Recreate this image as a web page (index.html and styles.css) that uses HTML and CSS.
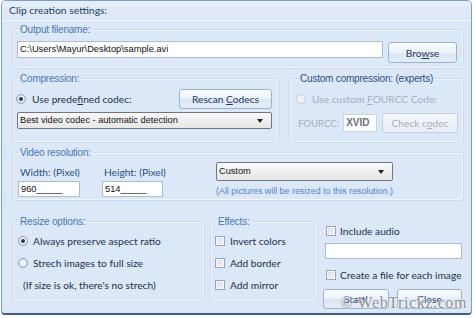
FILE: index.html
```html
<!DOCTYPE html>
<html lang="en">
<head>
    <meta charset="UTF-8">
    <title>Clip creation settings</title>
    <link rel="stylesheet" href="styles.css">
</head>
<body>
    <div class="window">
        <div class="title">Clip creation settings:</div>

        <div class="content">
            <!-- Output -->
            <div class="group output">
                <div class="group-label">Output filename:</div>
                <div class="output-row">
                    <div class="textbox filename">C:\Users\Mayur\Desktop\sample.avi</div>
                    <button class="btn browse">Bro<u>w</u>se</button>
                </div>
            </div>

            <!-- Compression -->
            <div class="pair">
                <div class="group compression">
                    <div class="group-label">Compression:</div>
                    <div class="line top-line">
                        <span class="radio checked"></span>
                        <span class="opt">Use prede<u>f</u>ined codec:</span>
                        <button class="btn rescan">Rescan <u>C</u>odecs</button>
                    </div>
                    <div class="select codec">Best video codec - automatic detection</div>
                </div>

                <div class="group custom">
                    <div class="group-label dark">Custom compression: (experts)</div>
                    <div class="line top-line">
                        <span class="radio disabled"></span>
                        <span class="opt muted">Use custom <u>F</u>OURCC Code:</span>
                    </div>
                    <div class="line fourcc-line">
                        <span class="muted small">FOURCC:</span>
                        <div class="textbox fourcc">XVID</div>
                        <button class="btn check" disabled>Check c<u>o</u>dec</button>
                    </div>
                </div>
            </div>

            <!-- Resolution -->
            <div class="group resolution">
                <div class="group-label">Video resolution:</div>
                <div class="res-row">
                    <div class="res-col width-col">
                        <div class="res-label">Width: (Pixel)</div>
                        <div class="textbox size">960_____</div>
                    </div>
                    <div class="res-col height-col">
                        <div class="res-label">Height: (Pixel)</div>
                        <div class="textbox size">514_____</div>
                    </div>
                    <div class="res-col preset-col">
                        <div class="select preset">Custom</div>
                        <div class="note">(All pictures will be resized to this resolution.)</div>
                    </div>
                </div>
            </div>

            <!-- Bottom -->
            <div class="bottom">
                <div class="group resize">
                    <div class="group-label">Resize options:</div>
                    <div class="list">
                        <div class="item"><span class="radio checked"></span><span class="opt">Always preserve aspect ratio</span></div>
                        <div class="item"><span class="radio"></span><span class="opt">Strech images to full size</span></div>
                        <div class="item hint"><span class="opt">(If size is ok, there's no strech)</span></div>
                    </div>
                </div>

                <div class="group effects">
                    <div class="group-label">Effects:</div>
                    <div class="list">
                        <div class="item"><span class="check-box"></span><span class="opt">Invert colors</span></div>
                        <div class="item"><span class="check-box"></span><span class="opt">Add border</span></div>
                        <div class="item"><span class="check-box"></span><span class="opt">Add mirror</span></div>
                    </div>
                </div>

                <div class="extras">
                    <div class="item audio"><span class="check-box"></span><span class="opt">Include audio</span></div>
                    <div class="textbox audio-file"></div>
                    <div class="item each"><span class="check-box"></span><span class="opt">Create a file for each image</span></div>
                    <div class="actions">
                        <button class="btn start">Start!</button>
                        <button class="btn close">Close</button>
                    </div>
                </div>
            </div>
        </div>

        <div class="watermark">© WebTrickz.com</div>
    </div>
</body>
</html>
```

FILE: styles.css
```css
/* General */
body {
    margin: 0;
    background: #fff;
    font-family: Lato, "Open Sans", sans-serif;
    font-size: 10.2px;
    color: #1e2f4d;
}
.window {
    position: relative;
    box-sizing: border-box;
    width: 471px;
    height: 315px;
    margin-left: 1px;
    background: #dce8f7;
    border: 1px solid #7d9cc6;
    border-bottom: 2px solid #3f5d8c;
    border-radius: 5px 5px 4px 4px;
    overflow: hidden;
}
.title {
    height: 19px;
    line-height: 19px;
    padding-left: 7px;
    background: linear-gradient(#e6eefa, #dbe7f6);
    border-bottom: 1px solid #f3f7fd;
    color: #1f3b63;
    font-size: 10.4px;
}
.content {
    padding: 0 8px 0 11px;
}

/* Group boxes */
.group {
    box-sizing: border-box;
    border: 1px solid #f1f6fd;
    box-shadow: 0 0 0 1px #cbdaee;
    border-radius: 3px;
    padding: 0 4px 0 3px;
}
.group-label {
    display: table;
    height: 12px;
    line-height: 12px;
    margin: -7px 0 0 2px;
    padding: 0 1px;
    background: #dce8f7;
    font-family: "Liberation Sans", Arial, sans-serif;
    font-size: 10px;
    letter-spacing: -0.2px;
    color: #4a78b5;
}
.group-label.dark {
    color: #2d4f82;
}

/* Inputs */
.textbox {
    box-sizing: border-box;
    background: #fff;
    border: 1px solid #abbdd6;
    font-family: "Liberation Sans", Arial, sans-serif;
    font-size: 9.3px;
    color: #111;
    padding: 0 2px;
    white-space: nowrap;
}
.btn {
    box-sizing: border-box;
    height: 20px;
    padding: 0;
    font-family: Lato, "Open Sans", sans-serif;
    font-size: 10.2px;
    color: #1e395b;
    white-space: nowrap;
    background: linear-gradient(#fbfdff, #eaf1fa 50%, #dbe6f3 51%, #e4ecf6);
    border: 1px solid #9db2ce;
    border-radius: 3px;
}
.btn[disabled] {
    color: #a4afbd;
    background: linear-gradient(#f4f8fc, #e8eef6);
    border-color: #c3d1e2;
}
.select {
    position: relative;
    box-sizing: border-box;
    background: linear-gradient(#fafafa, #e6e6e6);
    border: 1px solid #6f7782;
    border-radius: 2px;
    font-family: "Liberation Sans", Arial, sans-serif;
    font-size: 9.2px;
    color: #111;
    padding-left: 2px;
    white-space: nowrap;
}
.select::after {
    content: "";
    position: absolute;
    right: 8px;
    top: 50%;
    margin-top: -2px;
    border-left: 3px solid transparent;
    border-right: 3px solid transparent;
    border-top: 4px solid #222;
}
.radio {
    box-sizing: border-box;
    display: inline-block;
    width: 10px;
    height: 10px;
    border-radius: 50%;
    border: 1px solid #8d9db4;
    background: radial-gradient(circle, #f2f4f7 30%, #d3d9e2 100%);
    position: relative;
    flex: none;
}
.radio.checked::after {
    content: "";
    position: absolute;
    left: 2px;
    top: 2px;
    width: 4px;
    height: 4px;
    border-radius: 50%;
    background: #2d3a50;
}
.radio.disabled {
    border-color: #c1cad6;
    background: #eef2f7;
}
.check-box {
    box-sizing: border-box;
    display: inline-block;
    width: 10px;
    height: 10px;
    border: 1px solid #97a6ba;
    background: linear-gradient(135deg, #d9dee6, #f3f5f8);
    box-shadow: inset 0 0 0 1px #f6f8fb;
    flex: none;
}
.opt {
    white-space: nowrap;
}
.muted {
    color: #a3aebd;
}
.small {
    font-family: Lato, "Open Sans", sans-serif;
    font-size: 9.6px;
}

/* Output */
.output {
    height: 38px;
    margin-top: 9px;
}
.output-row {
    display: flex;
    align-items: flex-start;
    gap: 5px;
    margin-top: 5px;
}
.filename {
    width: 366px;
    height: 17px;
    line-height: 15px;
}
.browse {
    width: 69px;
    height: 21px;
    margin-top: 1px;
}

/* Compression */
.pair {
    display: flex;
    gap: 12px;
    margin-top: 11px;
}
.compression {
    width: 265px;
    height: 63px;
}
.custom {
    width: 173px;
    height: 63px;
    padding-left: 6px;
}
.line {
    display: flex;
    align-items: center;
}
.top-line {
    height: 20px;
    margin-top: 4px;
}
.top-line .radio {
    margin-left: -1px;
}
.top-line .opt {
    margin-left: 6px;
}
.rescan {
    width: 93px;
    margin-left: auto;
    margin-right: 1px;
}
.codec {
    width: 255px;
    height: 17px;
    line-height: 15px;
    margin: 3px 0 0 0;
}
.fourcc-line {
    margin-top: 4px;
    padding-left: 1px;
}
.fourcc {
    width: 34px;
    height: 18px;
    line-height: 16px;
    margin-left: 4px;
    font-weight: bold;
    color: #6a7280;
    font-size: 10px;
    border-color: #c9d5e4;
}
.check {
    width: 76px;
    margin-left: 5px;
}

/* Resolution */
.resolution {
    height: 47px;
    margin-top: 11px;
}
.res-row {
    display: flex;
    padding-left: 1px;
}
.width-col {
    width: 62px;
}
.height-col {
    width: 61px;
    margin-left: 22px;
}
.preset-col {
    margin-left: 53px;
    padding-top: 3px;
}
.res-label {
    height: 14px;
    line-height: 14px;
    margin: 6px 0 2px 2px;
    color: #2b4e86;
    white-space: nowrap;
}
.size {
    height: 16px;
    line-height: 14px;
}
.preset {
    width: 177px;
    height: 19px;
    line-height: 17px;
}
.note {
    margin-top: 5px;
    font-family: "Liberation Sans", Arial, sans-serif;
    font-size: 8.9px;
    color: #5584c0;
    white-space: nowrap;
}

/* Bottom */
.bottom {
    display: flex;
    margin-top: 22px;
}
.resize {
    width: 191px;
    height: 79px;
}
.effects {
    width: 106px;
    height: 79px;
    margin-left: 7px;
    padding-left: 3px;
}
.list {
    margin-top: 2px;
}
.item {
    display: flex;
    align-items: center;
    height: 22px;
}
.item .opt {
    margin-left: 5px;
}
.resize .item {
    padding-left: 1px;
}
.hint .opt {
    margin-left: 5px;
}
.extras {
    width: 139px;
    margin-left: 6px;
}
.extras .item {
    height: 14px;
    padding-left: 3px;
}
.extras .item .opt {
    margin-left: 4px;
}
.audio {
    margin-top: 2px;
}
.audio-file {
    width: 137px;
    height: 16px;
    margin: 5px 0 0 2px;
}
.each {
    margin-top: 9px;
}
.actions {
    display: flex;
    gap: 8px;
    margin-top: 7px;
}
.start {
    width: 66px;
}
.close {
    width: 65px;
}

/* Watermark */
.watermark {
    position: absolute;
    right: 4px;
    bottom: 1px;
    font-family: "Liberation Serif", serif;
    font-size: 16px;
    letter-spacing: 0.6px;
    color: #8b8f96;
    text-shadow: 0 0 2px #fff, 0 0 1px #fff;
}
```
